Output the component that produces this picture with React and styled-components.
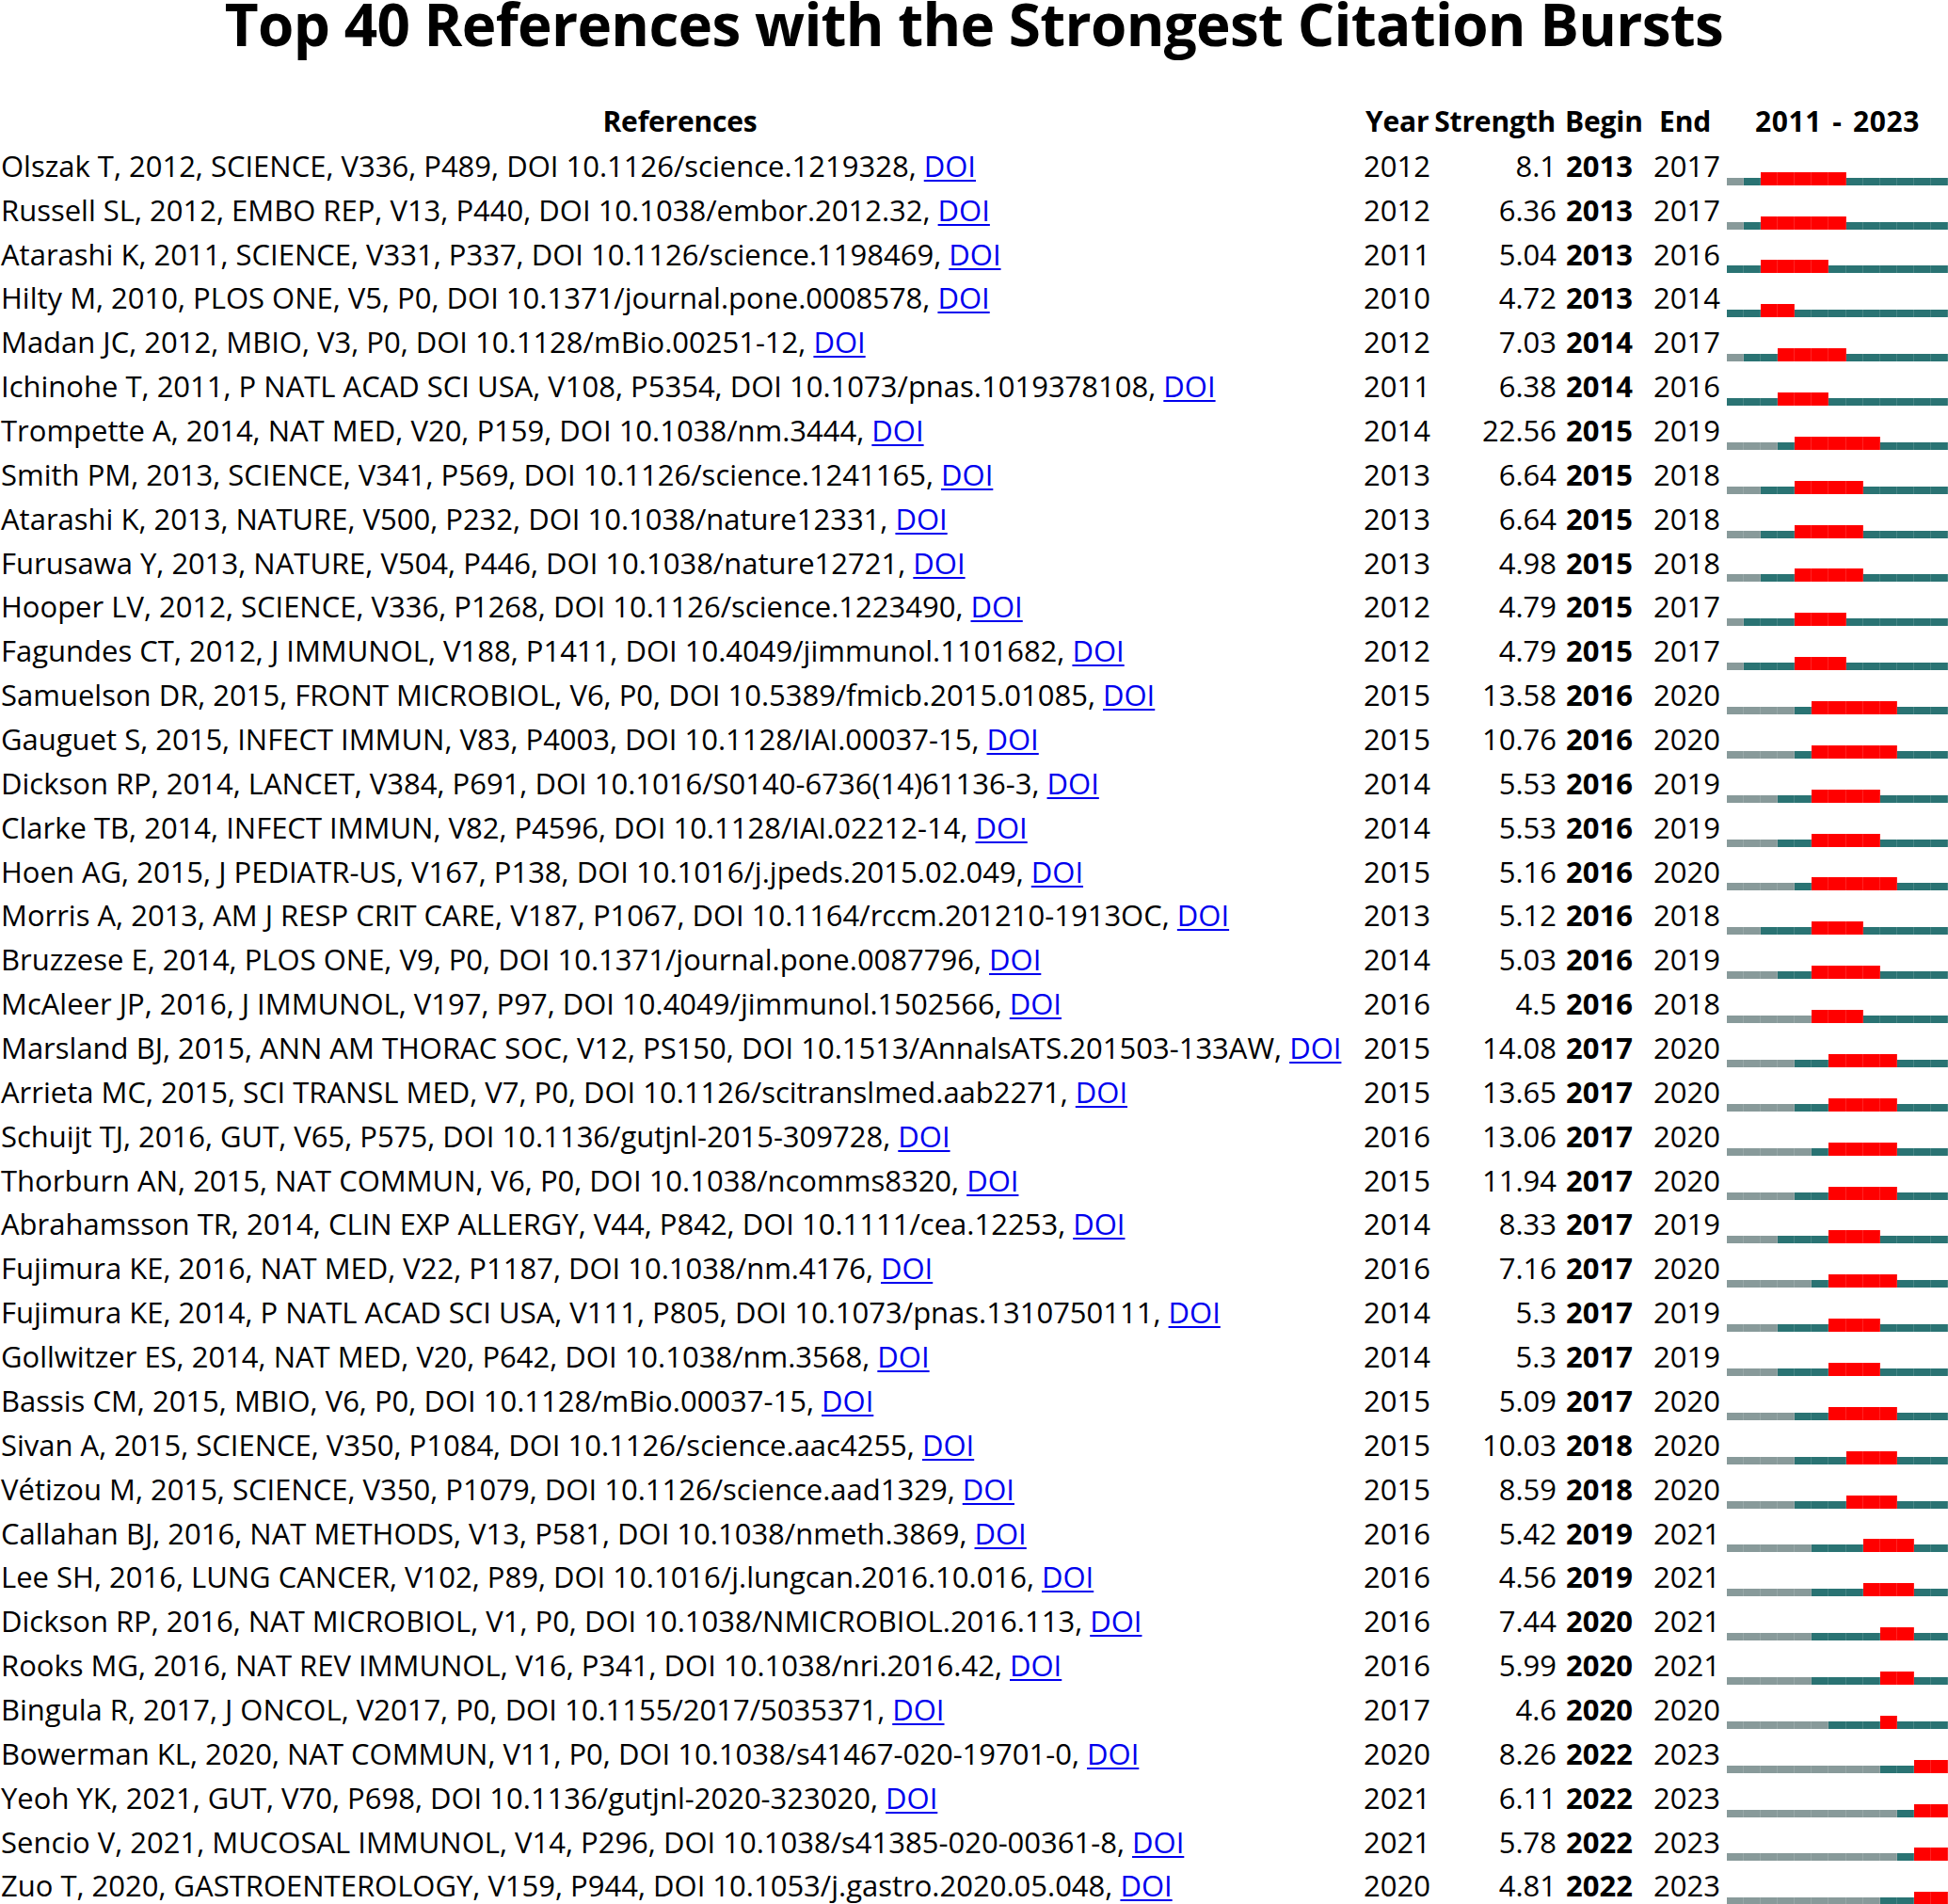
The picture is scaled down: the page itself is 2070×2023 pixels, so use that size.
import styled, { createGlobalStyle } from 'styled-components';

const FIRST_YEAR = 2011;
const LAST_YEAR = 2023;

const refs = [
  ['Olszak T, 2012, SCIENCE, V336, P489, DOI 10.1126/science.1219328', 2012, '8.1', 2013, 2017],
  ['Russell SL, 2012, EMBO REP, V13, P440, DOI 10.1038/embor.2012.32', 2012, '6.36', 2013, 2017],
  ['Atarashi K, 2011, SCIENCE, V331, P337, DOI 10.1126/science.1198469', 2011, '5.04', 2013, 2016],
  ['Hilty M, 2010, PLOS ONE, V5, P0, DOI 10.1371/journal.pone.0008578', 2010, '4.72', 2013, 2014],
  ['Madan JC, 2012, MBIO, V3, P0, DOI 10.1128/mBio.00251-12', 2012, '7.03', 2014, 2017],
  ['Ichinohe T, 2011, P NATL ACAD SCI USA, V108, P5354, DOI 10.1073/pnas.1019378108', 2011, '6.38', 2014, 2016],
  ['Trompette A, 2014, NAT MED, V20, P159, DOI 10.1038/nm.3444', 2014, '22.56', 2015, 2019],
  ['Smith PM, 2013, SCIENCE, V341, P569, DOI 10.1126/science.1241165', 2013, '6.64', 2015, 2018],
  ['Atarashi K, 2013, NATURE, V500, P232, DOI 10.1038/nature12331', 2013, '6.64', 2015, 2018],
  ['Furusawa Y, 2013, NATURE, V504, P446, DOI 10.1038/nature12721', 2013, '4.98', 2015, 2018],
  ['Hooper LV, 2012, SCIENCE, V336, P1268, DOI 10.1126/science.1223490', 2012, '4.79', 2015, 2017],
  ['Fagundes CT, 2012, J IMMUNOL, V188, P1411, DOI 10.4049/jimmunol.1101682', 2012, '4.79', 2015, 2017],
  ['Samuelson DR, 2015, FRONT MICROBIOL, V6, P0, DOI 10.5389/fmicb.2015.01085', 2015, '13.58', 2016, 2020],
  ['Gauguet S, 2015, INFECT IMMUN, V83, P4003, DOI 10.1128/IAI.00037-15', 2015, '10.76', 2016, 2020],
  ['Dickson RP, 2014, LANCET, V384, P691, DOI 10.1016/S0140-6736(14)61136-3', 2014, '5.53', 2016, 2019],
  ['Clarke TB, 2014, INFECT IMMUN, V82, P4596, DOI 10.1128/IAI.02212-14', 2014, '5.53', 2016, 2019],
  ['Hoen AG, 2015, J PEDIATR-US, V167, P138, DOI 10.1016/j.jpeds.2015.02.049', 2015, '5.16', 2016, 2020],
  ['Morris A, 2013, AM J RESP CRIT CARE, V187, P1067, DOI 10.1164/rccm.201210-1913OC', 2013, '5.12', 2016, 2018],
  ['Bruzzese E, 2014, PLOS ONE, V9, P0, DOI 10.1371/journal.pone.0087796', 2014, '5.03', 2016, 2019],
  ['McAleer JP, 2016, J IMMUNOL, V197, P97, DOI 10.4049/jimmunol.1502566', 2016, '4.5', 2016, 2018],
  ['Marsland BJ, 2015, ANN AM THORAC SOC, V12, PS150, DOI 10.1513/AnnalsATS.201503-133AW', 2015, '14.08', 2017, 2020],
  ['Arrieta MC, 2015, SCI TRANSL MED, V7, P0, DOI 10.1126/scitranslmed.aab2271', 2015, '13.65', 2017, 2020],
  ['Schuijt TJ, 2016, GUT, V65, P575, DOI 10.1136/gutjnl-2015-309728', 2016, '13.06', 2017, 2020],
  ['Thorburn AN, 2015, NAT COMMUN, V6, P0, DOI 10.1038/ncomms8320', 2015, '11.94', 2017, 2020],
  ['Abrahamsson TR, 2014, CLIN EXP ALLERGY, V44, P842, DOI 10.1111/cea.12253', 2014, '8.33', 2017, 2019],
  ['Fujimura KE, 2016, NAT MED, V22, P1187, DOI 10.1038/nm.4176', 2016, '7.16', 2017, 2020],
  ['Fujimura KE, 2014, P NATL ACAD SCI USA, V111, P805, DOI 10.1073/pnas.1310750111', 2014, '5.3', 2017, 2019],
  ['Gollwitzer ES, 2014, NAT MED, V20, P642, DOI 10.1038/nm.3568', 2014, '5.3', 2017, 2019],
  ['Bassis CM, 2015, MBIO, V6, P0, DOI 10.1128/mBio.00037-15', 2015, '5.09', 2017, 2020],
  ['Sivan A, 2015, SCIENCE, V350, P1084, DOI 10.1126/science.aac4255', 2015, '10.03', 2018, 2020],
  ['Vétizou M, 2015, SCIENCE, V350, P1079, DOI 10.1126/science.aad1329', 2015, '8.59', 2018, 2020],
  ['Callahan BJ, 2016, NAT METHODS, V13, P581, DOI 10.1038/nmeth.3869', 2016, '5.42', 2019, 2021],
  ['Lee SH, 2016, LUNG CANCER, V102, P89, DOI 10.1016/j.lungcan.2016.10.016', 2016, '4.56', 2019, 2021],
  ['Dickson RP, 2016, NAT MICROBIOL, V1, P0, DOI 10.1038/NMICROBIOL.2016.113', 2016, '7.44', 2020, 2021],
  ['Rooks MG, 2016, NAT REV IMMUNOL, V16, P341, DOI 10.1038/nri.2016.42', 2016, '5.99', 2020, 2021],
  ['Bingula R, 2017, J ONCOL, V2017, P0, DOI 10.1155/2017/5035371', 2017, '4.6', 2020, 2020],
  ['Bowerman KL, 2020, NAT COMMUN, V11, P0, DOI 10.1038/s41467-020-19701-0', 2020, '8.26', 2022, 2023],
  ['Yeoh YK, 2021, GUT, V70, P698, DOI 10.1136/gutjnl-2020-323020', 2021, '6.11', 2022, 2023],
  ['Sencio V, 2021, MUCOSAL IMMUNOL, V14, P296, DOI 10.1038/s41385-020-00361-8', 2021, '5.78', 2022, 2023],
  ['Zuo T, 2020, GASTROENTEROLOGY, V159, P944, DOI 10.1053/j.gastro.2020.05.048', 2020, '4.81', 2022, 2023],
];

const years = [];
for (let y = FIRST_YEAR; y <= LAST_YEAR; y++) years.push(y);

function kindOf(year, published, begin, end) {
  if (year >= begin && year <= end) return 'burst';
  if (year < published) return 'before';
  return 'idle';
}

export default function App() {
  return (
    <>
      <GlobalStyle />
      <Page>
        <Title>Top 40 References with the Strongest Citation Bursts</Title>
        <Table>
          <HeadRow>
            <HeadRef>References</HeadRef>
            <HeadYear>Year</HeadYear>
            <HeadStrength>Strength</HeadStrength>
            <HeadBegin>Begin</HeadBegin>
            <HeadEnd>End</HeadEnd>
            <HeadRange>
              {FIRST_YEAR} - {LAST_YEAR}
            </HeadRange>
          </HeadRow>
          {refs.map(([text, year, strength, begin, end], i) => (
            <Row key={i}>
              <RefCell>
                {text}, <Doi href="#">DOI</Doi>
              </RefCell>
              <YearCell>{year}</YearCell>
              <StrengthCell>{strength}</StrengthCell>
              <BeginCell>{begin}</BeginCell>
              <EndCell>{end}</EndCell>
              <BarCell>
                {years.map((y) => (
                  <Segment key={y} $kind={kindOf(y, year, begin, end)} />
                ))}
              </BarCell>
            </Row>
          ))}
        </Table>
      </Page>
    </>
  );
}

const GlobalStyle = createGlobalStyle`
  * { box-sizing: border-box; }
  body {
    margin: 0;
    background: #FFFFFF;
    color: #000000;
    font-family: "Open Sans", "Noto Sans", sans-serif;
  }
`;

const COLUMNS = '1445px 77px 135px 95px 83px 235px';
const ROW_HEIGHT = '46.87px';

const Page = styled.main`
  width: 2070px;
  height: 2023px;
  overflow: hidden;
`;

const Title = styled.h1`
  margin: 0 0 57px;
  padding-top: 1px;
  font-size: 62px;
  line-height: 48px;
  font-weight: 700;
  letter-spacing: -0.7px;
  text-align: center;
  white-space: nowrap;
`;

const Table = styled.section`
  display: flex;
  flex-direction: column;
`;

const HeadRow = styled.div`
  display: grid;
  grid-template-columns: ${COLUMNS};
  height: ${ROW_HEIGHT};
  font-size: 30px;
  line-height: ${ROW_HEIGHT};
  font-weight: 700;
  letter-spacing: -0.2px;
  white-space: nowrap;
`;

const HeadRef = styled.div`
  text-align: center;
`;

const HeadYear = styled.div`
  padding-left: 6px;
`;

const HeadStrength = styled.div`
  text-align: right;
  padding-right: 4px;
`;

const HeadBegin = styled.div`
  padding-left: 6px;
`;

const HeadEnd = styled.div`
  text-align: center;
  padding-right: 6px;
`;

const HeadRange = styled.div`
  text-align: center;
  letter-spacing: 0.6px;
  word-spacing: 3px;
`;

const Row = styled.div`
  display: grid;
  grid-template-columns: ${COLUMNS};
  height: ${ROW_HEIGHT};
  font-size: 31px;
  line-height: ${ROW_HEIGHT};
  white-space: nowrap;
`;

const RefCell = styled.div`
  padding-left: 1px;
`;

const Doi = styled.a`
  color: #0000EE;
  text-decoration: underline;
  text-decoration-thickness: 2px;
  text-underline-offset: 3px;
`;

const YearCell = styled.div`
  padding-left: 4px;
`;

const StrengthCell = styled.div`
  text-align: right;
  padding-right: 3px;
`;

const BeginCell = styled.div`
  padding-left: 7px;
  font-weight: 700;
`;

const EndCell = styled.div`
  text-align: center;
  padding-right: 2px;
`;

const BarCell = styled.div`
  display: flex;
  align-items: flex-end;
  padding-bottom: 3px;
`;

const SEGMENT_COLORS = {
  before: '#889A9A',
  idle: '#2A7373',
  burst: '#FF0000',
};

const Segment = styled.span`
  flex: 1;
  height: ${(p) => (p.$kind === 'burst' ? '14px' : '8px')};
  background: ${(p) => SEGMENT_COLORS[p.$kind]};
  box-shadow: inset -1px 0 0 rgba(255, 255, 255, 0.14);
`;
